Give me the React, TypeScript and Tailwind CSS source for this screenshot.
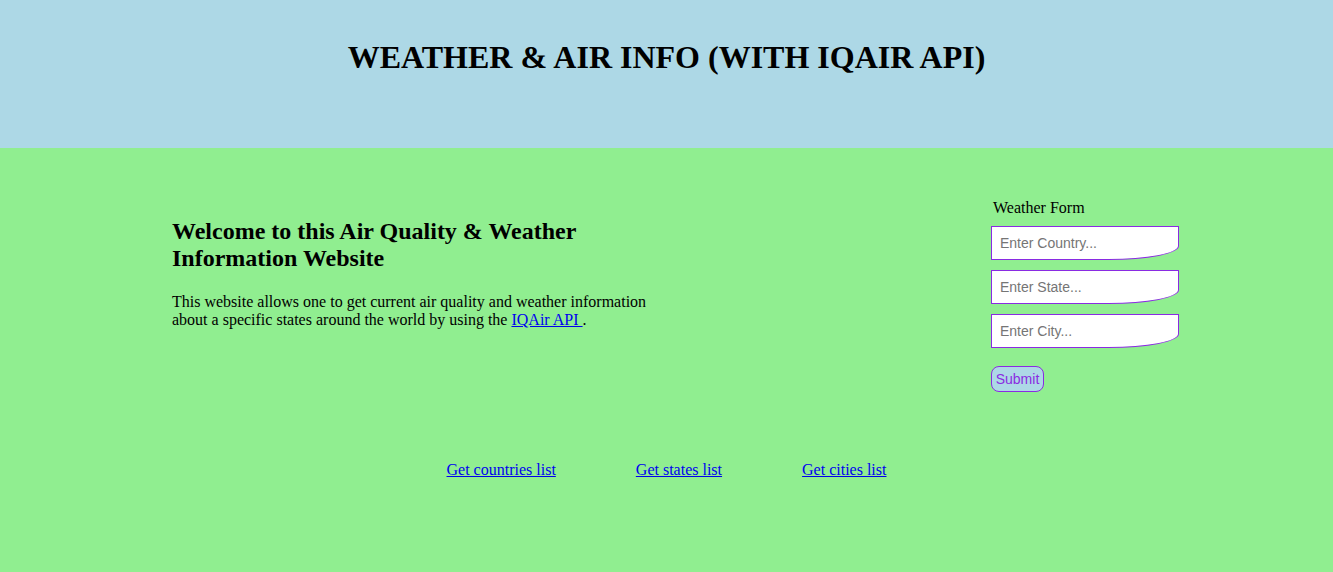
export default function App() {
  const serif = { fontFamily: '"Liberation Serif", "Times New Roman", serif' }
  const sans = { fontFamily: '"Liberation Sans", Arial, sans-serif' }
  return (
    <div className="min-h-[572px] bg-[#90ee90] text-black" style={serif}>
      <header className="h-[148px] bg-[#add8e6] pt-[39px]">
        <h1 className="text-center text-[32px] font-bold leading-[37px]">WEATHER &amp; AIR INFO (WITH IQAIR API)</h1>
      </header>

      <main className="flex items-start">
        <section className="ml-[172px] mt-[70px] w-[490px]">
          <h2 className="text-[24px] font-bold leading-[27px]">Welcome to this Air Quality &amp; Weather Information Website</h2>
          <p className="mt-[21px] text-[16px] leading-[18px]">
            This website allows one to get current air quality and weather information about a specific states around the world by using the{' '}
            <a href="#" className="text-[#0000ee] underline">IQAir API </a>.
          </p>
        </section>

        <form className="ml-auto mr-[154px] mt-[51px] flex w-[188px] flex-col" onSubmit={(e) => e.preventDefault()}>
          <label className="ml-[2px] text-[16px] leading-[18px]">Weather Form</label>
          <div className="mt-[9px] flex flex-col gap-[10px]" style={sans}>
            {['Enter Country...', 'Enter State...', 'Enter City...'].map((p) => (
              <input
                key={p}
                placeholder={p}
                className="h-[34px] w-[188px] rounded-br-[70px_14px] border border-[#8a2be2] bg-white pl-[8px] text-[14px] outline-none placeholder:text-[#757575]"
              />
            ))}
          </div>
          <button
            type="submit"
            className="mt-[18px] h-[26px] w-[53px] rounded-[8px] border border-[#8a2be2] bg-[#add8e6] text-[14px] text-[#8a2be2]"
            style={sans}
          >
            Submit
          </button>
        </form>
      </main>

      <nav className="mt-[69px] flex justify-center gap-[80px] text-[16px] leading-[18px]">
        <a href="#" className="text-[#0000ee] underline">Get countries list</a>
        <a href="#" className="text-[#0000ee] underline">Get states list</a>
        <a href="#" className="text-[#0000ee] underline">Get cities list</a>
      </nav>
    </div>
  )
}
